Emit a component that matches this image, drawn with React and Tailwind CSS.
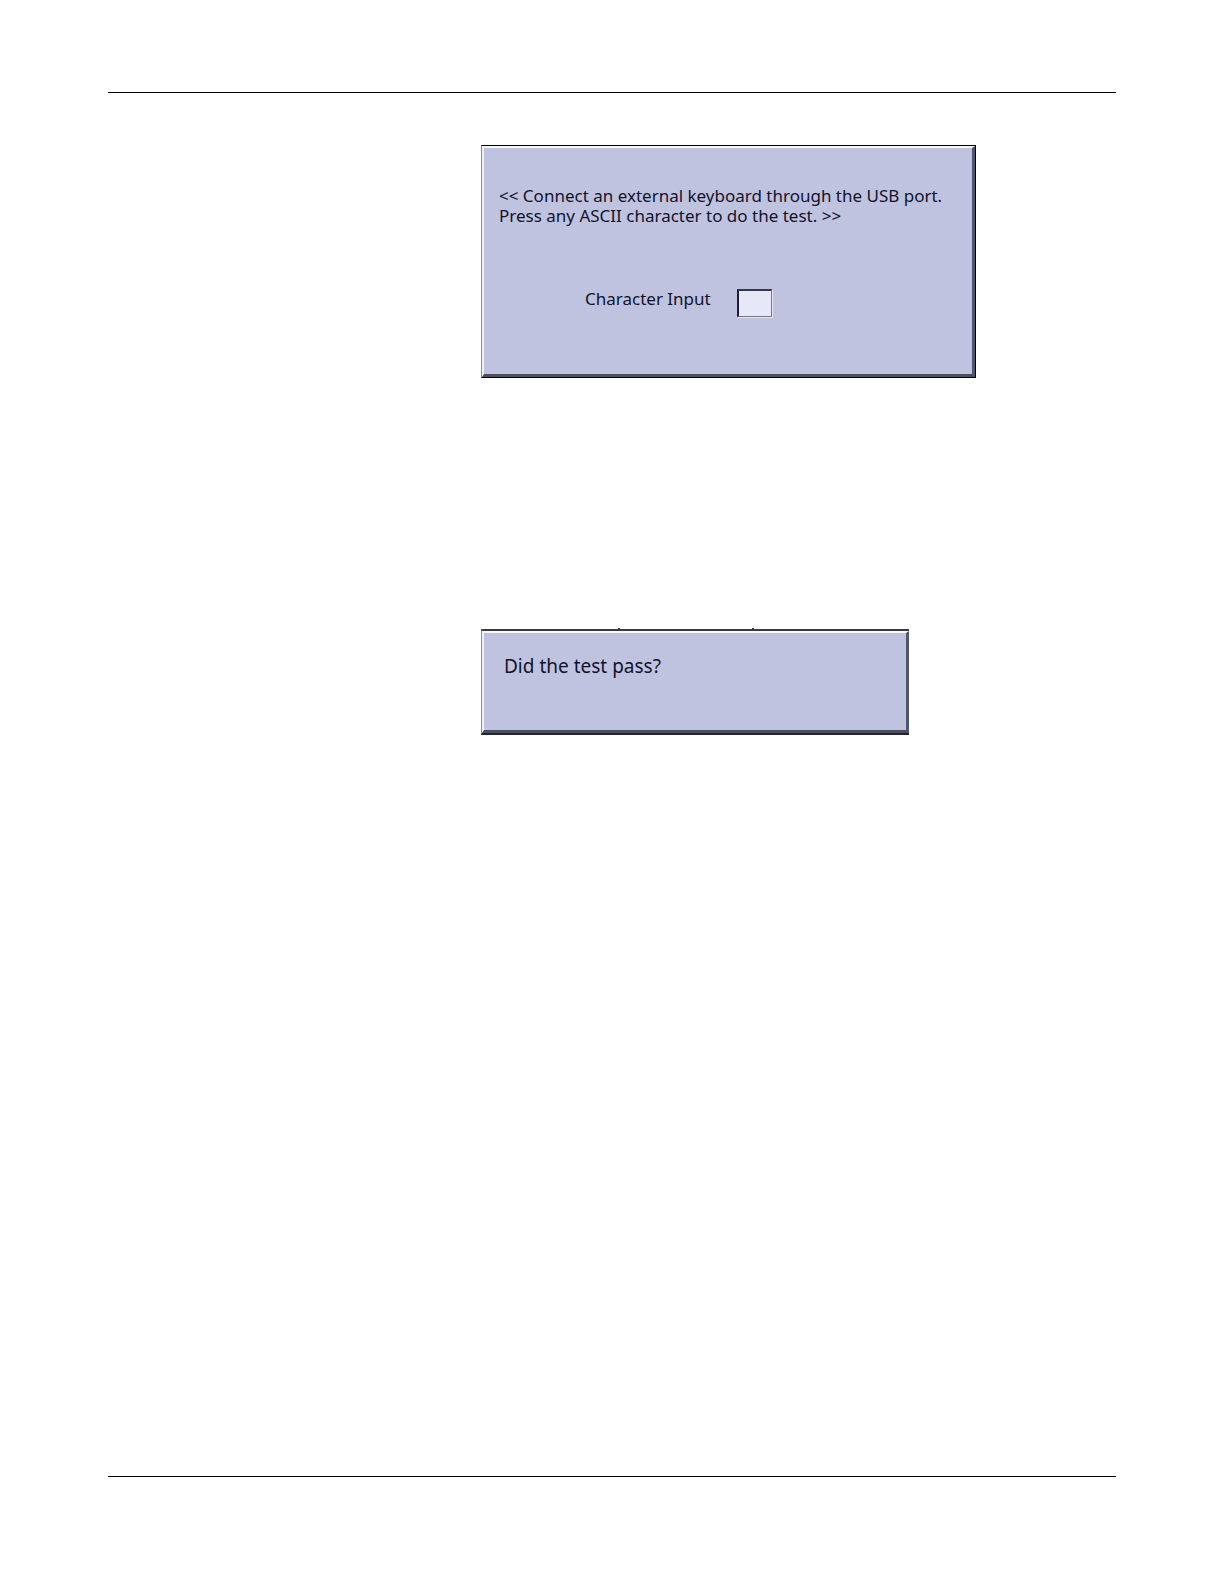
import { useState } from "react";

// Raised panel used by the diagnostic screens
function Panel({ frame, className, children }) {
  return (
    <section className={`relative w-full border-l border-l-[#8c8c98] ${frame}`}>
      <div
        className={`border-t-2 border-l-2 border-r-3 border-b-3 border-t-[#f8f8f8] border-l-[#f0f0f6] border-r-[#52566a] border-b-[#4a4e60] bg-[#c0c3e0] text-[#10132b] ${className}`}
      >
        {children}
      </div>
    </section>
  );
}

function App() {
  const [character, setCharacter] = useState("");

  return (
    <div className="flex min-h-screen flex-col bg-white px-[108px] pt-[92px] pb-[107px] font-['Noto_Sans',sans-serif]">
      <main className="flex grow flex-col items-start border-y border-black pt-[52px] pl-[373px]">
        {/* Keyboard test */}
        <Panel
          frame="max-w-[495px] border-t border-r border-b border-t-black border-r-black border-b-black"
          className="px-[15px] pt-[38px] pb-[57px]"
        >
          <p className="text-[17px] leading-5">
            &lt;&lt; Connect an external keyboard through the USB port.
            <br />
            Press any ASCII character to do the test. &gt;&gt;
          </p>
          <div className="mt-[63px] flex items-start pl-[86px]">
            <label htmlFor="character" className="w-[152px] text-[17px] leading-5">
              Character Input
            </label>
            <input
              id="character"
              type="text"
              maxLength={1}
              value={character}
              onChange={(e) => setCharacter(e.target.value)}
              className="h-7 w-[35px] border-t-2 border-l-2 border-r border-b border-t-[#34364c] border-l-[#1c1e38] border-r-[#77787f] border-b-[#77787f] bg-[#e6e7f7] text-center text-[17px] shadow-[1px_1px_0_#e4e5ee] outline-none"
            />
          </div>
        </Panel>

        {/* Result question */}
        <Panel
          frame="mt-[251px] max-w-[428px] border-t-2 border-b-2 border-t-[#3b3842] border-b-[#24242e]"
          className="px-5 pt-[21px] pb-[52px]"
        >
          <span className="absolute -top-[3px] left-[136px] h-px w-0.5 bg-[#3b3842]" />
          <span className="absolute -top-[3px] left-[270px] h-px w-0.5 bg-[#3b3842]" />
          <p className="text-[19px] leading-6">Did the test pass?</p>
        </Panel>
      </main>
    </div>
  );
}

export default App;
